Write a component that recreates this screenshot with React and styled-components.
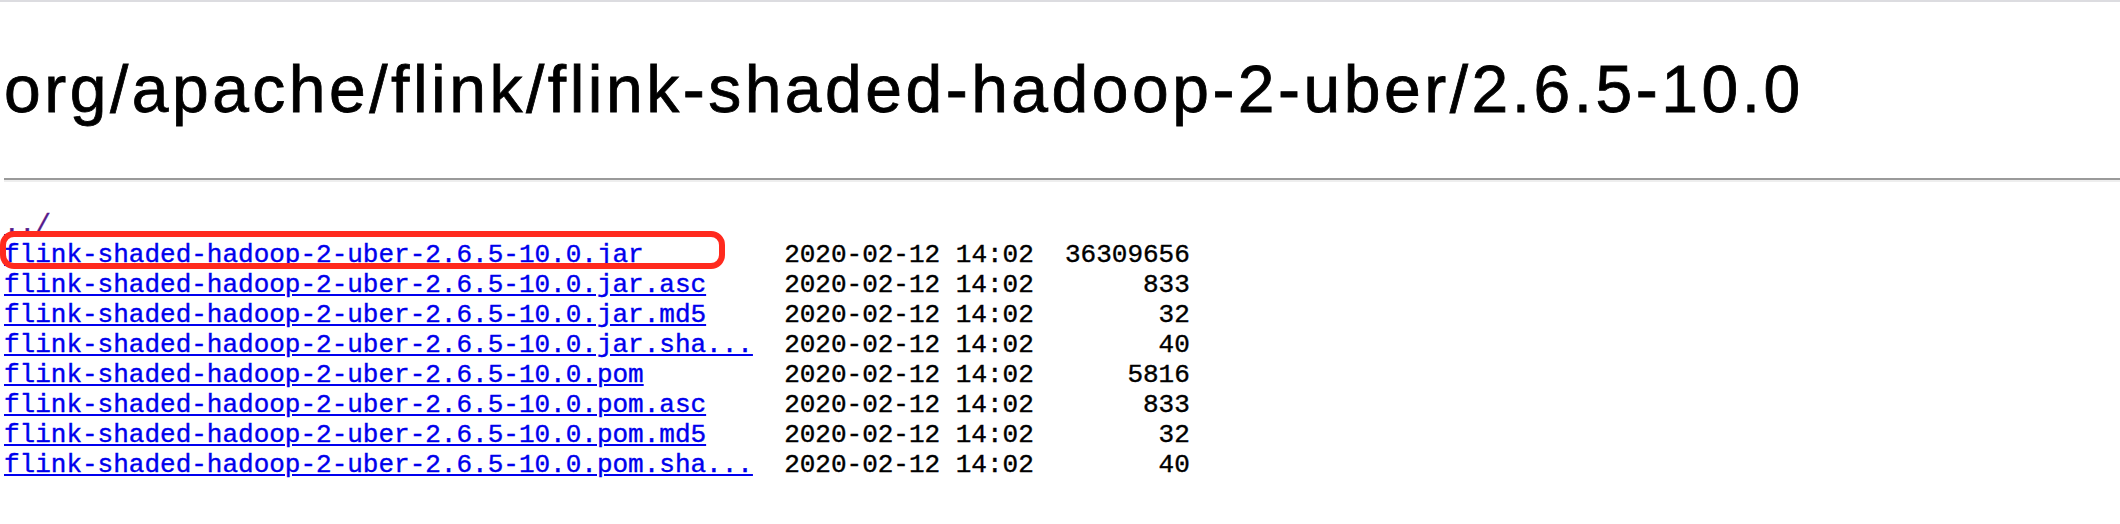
import React from 'react';
import styled, { createGlobalStyle } from 'styled-components';

const GlobalStyle = createGlobalStyle`
  html, body {
    margin: 0;
    padding: 0;
    background: #ffffff;
  }
  body {
    font-family: "Liberation Sans", Arial, sans-serif;
    color: #000000;
  }
`;

const TopEdge = styled.div`
  height: 2px;
  background: #dcdce0;
`;

const Page = styled.div`
  padding-left: 4px;
`;

const Title = styled.h1`
  margin: 49px 0 51px 0;
  font-family: "Liberation Sans", Arial, sans-serif;
  font-size: 66px;
  font-weight: normal;
  letter-spacing: 3.5px;
  -webkit-text-stroke: 0.8px #000000;
  line-height: 76px;
  white-space: nowrap;
`;

const Rule = styled.hr`
  margin: 0;
  height: 0;
  border: none;
  border-top: 2px solid #9a9a9a;
  border-bottom: 2px solid #eeeeee;
`;

const Listing = styled.pre`
  position: relative;
  margin: 28px 0 0 0;
  font-family: "Liberation Mono", "Courier New", monospace;
  font-size: 26px;
  line-height: 30px;
  color: #000000;
  -webkit-text-stroke: 0.4px currentColor;
`;

const FileLink = styled.a`
  color: ${props => (props.visited ? '#551a8b' : '#0000ee')};
  text-decoration: underline;
  text-underline-offset: 2px;
`;

const Highlight = styled.div`
  position: absolute;
  top: 21px;
  left: -4px;
  width: 725px;
  height: 38px;
  box-sizing: border-box;
  border: 6px solid #ff2a1e;
  border-radius: 14px;
  pointer-events: none;
`;

const base = 'flink-shaded-hadoop-2-uber-2.6.5-10.0';

const files = [
  { name: `${base}.jar`, size: 36309656 },
  { name: `${base}.jar.asc`, size: 833 },
  { name: `${base}.jar.md5`, size: 32 },
  { name: `${base}.jar.sha...`, size: 40 },
  { name: `${base}.pom`, size: 5816 },
  { name: `${base}.pom.asc`, size: 833 },
  { name: `${base}.pom.md5`, size: 32 },
  { name: `${base}.pom.sha...`, size: 40 },
];

const DATE = '2020-02-12 14:02';

const App = () => {
  return (
    <>
      <GlobalStyle />
      <TopEdge />
      <Page>
        <Title>org/apache/flink/flink-shaded-hadoop-2-uber/2.6.5-10.0</Title>
        <Rule />
        <Listing>
          <FileLink href="#" visited>../</FileLink>
          {'\n'}
          {files.map(file => (
            <React.Fragment key={file.name}>
              <FileLink href="#">{file.name}</FileLink>
              {' '.repeat(50 - file.name.length)}
              {DATE}
              {String(file.size).padStart(10, ' ')}
              {'\n'}
            </React.Fragment>
          ))}
          <Highlight />
        </Listing>
      </Page>
    </>
  );
};

export default App;
